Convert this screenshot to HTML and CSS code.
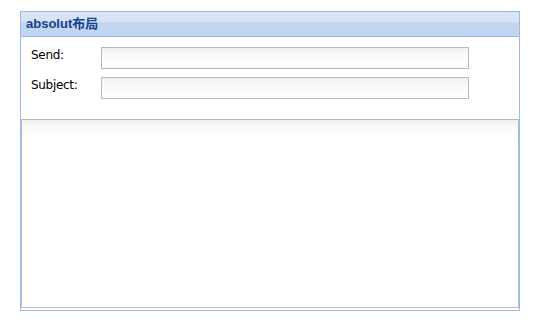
FILE: index.html
```html
<!DOCTYPE html>
<html>
<head>
  <meta charset="UTF-8" />
  <title>absolut布局</title>
  <link rel="stylesheet" href="styles.css">
</head>
<body>

<div class="panel">
  <!-- Panel title bar -->
  <div class="panel-header">absolut布局</div>

  <div class="panel-body">
    <div class="form-row">
      <label class="form-label">Send:</label>
      <input class="form-input" type="text" />
    </div>
    <div class="form-row">
      <label class="form-label">Subject:</label>
      <input class="form-input" type="text" />
    </div>

    <!-- Message area fills the rest of the panel -->
    <textarea class="form-text"></textarea>
  </div>
</div>

</body>
</html>
```

FILE: styles.css
```css
body {
  margin: 0;
  background: #fff;
  font-family: "DejaVu Sans", Tahoma, sans-serif;
}

/* Outer panel box */
.panel {
  margin: 11px 0 0 20px;
  width: 500px;
  height: 300px;
  box-sizing: border-box;
  display: flex;
  flex-direction: column;
}

.panel-header {
  height: 26px;
  box-sizing: border-box;
  border: 1px solid #99bbe8;
  padding: 4px 0 0 5px;
  color: #15428b;
  font-family: "Liberation Sans", "Noto Sans CJK SC", sans-serif;
  font-weight: bold;
  font-size: 13px;
  line-height: 16px;
  background: linear-gradient(#dbe7f6 0, #d5e2f3 10px, #bcd1ee 11px, #c3d7f1 12px, #bfd4f0 100%);
}

.panel-body {
  flex: 1;
  border: 1px solid #99bbe8;
  border-top: none;
  background: #fff;
  padding: 10px 0 2px 0;
  display: flex;
  flex-direction: column;
  gap: 8px;
}

.form-row {
  display: flex;
  align-items: flex-start;
  padding-left: 10px;
}

.form-label {
  width: 70px;
  padding-top: 1px;
  font-size: 12px;
  line-height: 15px;
  letter-spacing: -0.3px;
  color: #000;
}

.form-input {
  width: 368px;
  height: 22px;
  box-sizing: border-box;
  margin: 0;
  border: 1px solid #b5b8c8;
  background: linear-gradient(#eef0ef 0, #f8f9f8 6px, #fff 100%);
  padding: 0 3px;
}

/* Big message box */
.form-text {
  flex: 1;
  margin: 12px 0 0 0;
  box-sizing: border-box;
  border: 1px solid #b5b8c8;
  border-left-color: #a9bde0;
  background: linear-gradient(#eef0ef 0, #fafafa 8px, #fff 18px);
  resize: none;
}
```
